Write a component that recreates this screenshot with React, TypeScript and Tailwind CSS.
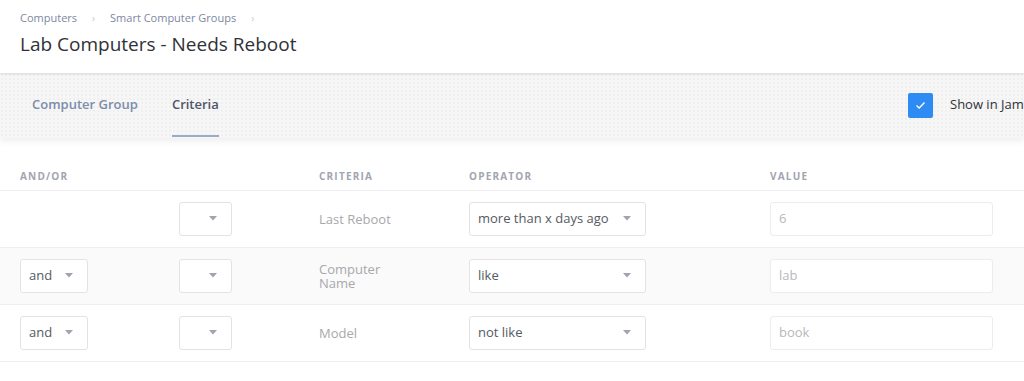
import React from 'react';

type Row = {
  andOr?: string;
  criteria: string;
  operator: string;
  value: string;
  shaded?: boolean;
};

const rows: Row[] = [
  { criteria: 'Last Reboot', operator: 'more than x days ago', value: '6' },
  { andOr: 'and', criteria: 'Computer Name', operator: 'like', value: 'lab', shaded: true },
  { andOr: 'and', criteria: 'Model', operator: 'not like', value: 'book' },
];

const Caret = () => (
  <svg width="8" height="5" viewBox="0 0 8 5" className="shrink-0">
    <path d="M0 0 L8 0 L4 4.5 Z" fill="#a0a4ae" />
  </svg>
);

const Select: React.FC<{ label?: string; className?: string }> = ({ label, className = '' }) => (
  <div
    className={`flex h-[34px] items-center justify-between rounded-[3px] border border-[#e3e3e6] bg-white pl-2 pr-[14px] text-[13px] text-[#555a63] ${className}`}
  >
    <span>{label}</span>
    <Caret />
  </div>
);

export default function App() {
  return (
    <div className="min-h-[381px] overflow-hidden bg-white font-['Open_Sans','Liberation_Sans',sans-serif]">
      {/* Page header */}
      <div className="relative z-10 bg-white px-5 pt-[10px] pb-[17px] shadow-[0_1px_2px_rgba(0,0,0,0.12)]">
        <div className="flex items-center text-[11px] text-[#7d88a1]">
          <span>Computers</span>
          <span className="mx-[15px] text-[10px] text-[#c6cad3]">›</span>
          <span>Smart Computer Groups</span>
          <span className="mx-[15px] text-[10px] text-[#c6cad3]">›</span>
        </div>
        <h1 className="mt-[5px] text-[19px] leading-[24px] text-[#2f3238]">Lab Computers - Needs Reboot</h1>
      </div>

      {/* Tabs */}
      <div className="relative flex h-[65px] items-stretch bg-[#f6f6f6] bg-[radial-gradient(#efefef_1px,transparent_1px)] bg-[length:4px_4px] pl-8 shadow-[0_4px_6px_rgba(0,0,0,0.06)]">
        <div className="flex items-center text-[13px] font-semibold text-[#7d8cab]">Computer Group</div>
        <div className="relative ml-[34px] flex items-center text-[13px] font-semibold text-[#4f5569]">
          Criteria
          <div className="absolute bottom-[1px] left-0 right-0 h-[2px] bg-[#9aabc8]" />
        </div>
        <div className="ml-auto flex items-center whitespace-nowrap">
          <div className="flex h-[25px] w-[25px] items-center justify-center rounded-[2px] bg-[#2e8bf3]">
            <svg width="11" height="9" viewBox="0 0 11 9">
              <path d="M1.5 4.5 L4.2 7 L9.5 1.5" fill="none" stroke="white" strokeWidth="1.4" />
            </svg>
          </div>
          <span className="ml-[17px] w-[74px] overflow-hidden text-[13px] text-[#2f3238]">Show in Jamf Pro Dashboard</span>
        </div>
      </div>

      {/* Criteria table */}
      <div className="mt-[31px]">
        <div className="grid h-[22px] grid-cols-[159px_140px_150px_301px_1fr] border-b border-[#eeeef0] px-5 text-[10px] font-bold tracking-[0.12em] text-[#a2a5af]">
          <div>AND/OR</div>
          <div />
          <div>CRITERIA</div>
          <div>OPERATOR</div>
          <div>VALUE</div>
        </div>
        {rows.map((r, i) => (
          <div
            key={i}
            className={`grid h-[57px] grid-cols-[159px_140px_150px_301px_1fr] items-center border-b border-[#eeeef0] px-5 ${r.shaded ? 'bg-[#fafafa]' : 'bg-white'}`}
          >
            <div>{r.andOr && <Select label={r.andOr} className="w-[68px]" />}</div>
            <div>
              <Select className="w-[53px]" />
            </div>
            <div className="w-[80px] text-[13px] leading-[14px] text-[#a8a8ab]">{r.criteria}</div>
            <div>
              <Select label={r.operator} className="w-[177px]" />
            </div>
            <div>
              <div className="flex h-[34px] w-[223px] items-center rounded-[3px] border border-[#ececef] bg-white px-2 text-[13px] text-[#b8b8bb]">
                {r.value}
              </div>
            </div>
          </div>
        ))}
      </div>
    </div>
  );
}
